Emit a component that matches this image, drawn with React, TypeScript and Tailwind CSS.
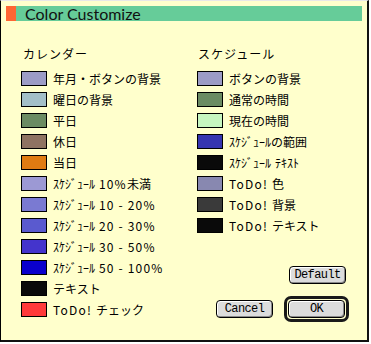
import React from "react";

type Item = { label: string; color: string };

const calendar: Item[] = [
  { label: "年月・ボタンの背景", color: "#9c9cc6" },
  { label: "曜日の背景", color: "#a3bfc8" },
  { label: "平日", color: "#6b8b63" },
  { label: "休日", color: "#8f7362" },
  { label: "当日", color: "#e07b12" },
  { label: "ｽｹｼﾞｭｰﾙ 10%未満", color: "#9c99d4" },
  { label: "ｽｹｼﾞｭｰﾙ 10 - 20%", color: "#7a7ad2" },
  { label: "ｽｹｼﾞｭｰﾙ 20 - 30%", color: "#5a5acf" },
  { label: "ｽｹｼﾞｭｰﾙ 30 - 50%", color: "#4434cc" },
  { label: "ｽｹｼﾞｭｰﾙ 50 - 100%", color: "#0a00cc" },
  { label: "テキスト", color: "#0a0a0a" },
  { label: "ToDo! チェック", color: "#ff3a3a" },
];

const schedule: Item[] = [
  { label: "ボタンの背景", color: "#9c9cc6" },
  { label: "通常の時間", color: "#6b8b63" },
  { label: "現在の時間", color: "#c6f6c0" },
  { label: "ｽｹｼﾞｭｰﾙの範囲", color: "#3535b0" },
  { label: "ｽｹｼﾞｭｰﾙ ﾃｷｽﾄ", color: "#0a0a0a" },
  { label: "ToDo! 色", color: "#8888b0" },
  { label: "ToDo! 背景", color: "#3a3a3a" },
  { label: "ToDo! テキスト", color: "#0a0a0a" },
];

// latin runs are spaced out a bit, like the Osaka-style glyphs
function Label({ text }: { text: string }) {
  const parts = text.split(/([A-Za-z0-9!%\- ]+)/).filter((p) => p !== "");
  return (
    <span className="text-[12px] leading-none whitespace-pre flex items-center">
      {parts.map((p, i) =>
        /^[A-Za-z0-9!%\- ]+$/.test(p) ? (
          <span key={i} className="tracking-[1.2px]">
            {p}
          </span>
        ) : (
          <span key={i}>{p}</span>
        )
      )}
    </span>
  );
}

function ColorRow({ item }: { item: Item }) {
  return (
    <li className="flex items-center h-[21px] gap-[6px]">
      <span
        className="w-[26px] h-[15px] border border-black shrink-0"
        style={{ background: item.color }}
      />
      <Label text={item.label} />
    </li>
  );
}

function MacButton({ children }: { children: React.ReactNode }) {
  return (
    <button className="flex items-center justify-center w-[57px] h-[18px] rounded-[4px] border border-black bg-[#dcdcdc] shadow-[inset_1px_1px_0_#ffffff,inset_-1px_-1px_0_#8a8a8a] text-[12px] tracking-[-0.6px] leading-none text-black font-['Liberation_Mono',monospace]">
      {children}
    </button>
  );
}

export default function App() {
  return (
    <div className="w-[371px] h-[344px] bg-white">
      <div className="w-[369px] h-[342px] bg-[#ffffcc] border-l border-t border-l-black border-t-[#e8e8e8] border-r-2 border-b-2 border-r-[#111] border-b-[#111] flex flex-col text-black font-['Noto_Sans_CJK_JP',sans-serif]">
        {/* title bar */}
        <div className="mt-[5px] mx-[5px] h-[15px] flex">
          <div className="w-[10px] bg-[#ff6633]" />
          <div className="flex-1 bg-[#66cc99] flex items-center pl-[9px]">
            <span className="text-[16px] leading-none font-['Lato',sans-serif] text-[#111]">
              Color Customize
            </span>
          </div>
        </div>

        <div className="grid grid-cols-[176px_1fr] pl-[20px] mt-[23px]">
          <div>
            <div className="h-[20px] flex items-center text-[12px] leading-none pl-[2px] tracking-[1px]">
              カレンダー
            </div>
            <ul className="mt-[4px]">
              {calendar.map((c) => (
                <ColorRow key={c.label} item={c} />
              ))}
            </ul>
          </div>
          <div className="pr-[18px]">
            <div className="h-[20px] flex items-center text-[12px] leading-none pl-[1px] tracking-[1px]">
              スケジュール
            </div>
            <ul className="mt-[4px]">
              {schedule.map((c) => (
                <ColorRow key={c.label} item={c} />
              ))}
            </ul>
            <div className="flex flex-col items-end mt-[30px]">
              <div className="flex mr-[3px]">
                <MacButton>Default</MacButton>
              </div>
              <div className="flex items-center gap-[11px] mt-[12px]">
                <MacButton>Cancel</MacButton>
                <div className="flex rounded-[7px] border-[3px] border-[#1a1a1a] p-px">
                  <MacButton>OK</MacButton>
                </div>
              </div>
            </div>
          </div>
        </div>
      </div>
    </div>
  );
}
